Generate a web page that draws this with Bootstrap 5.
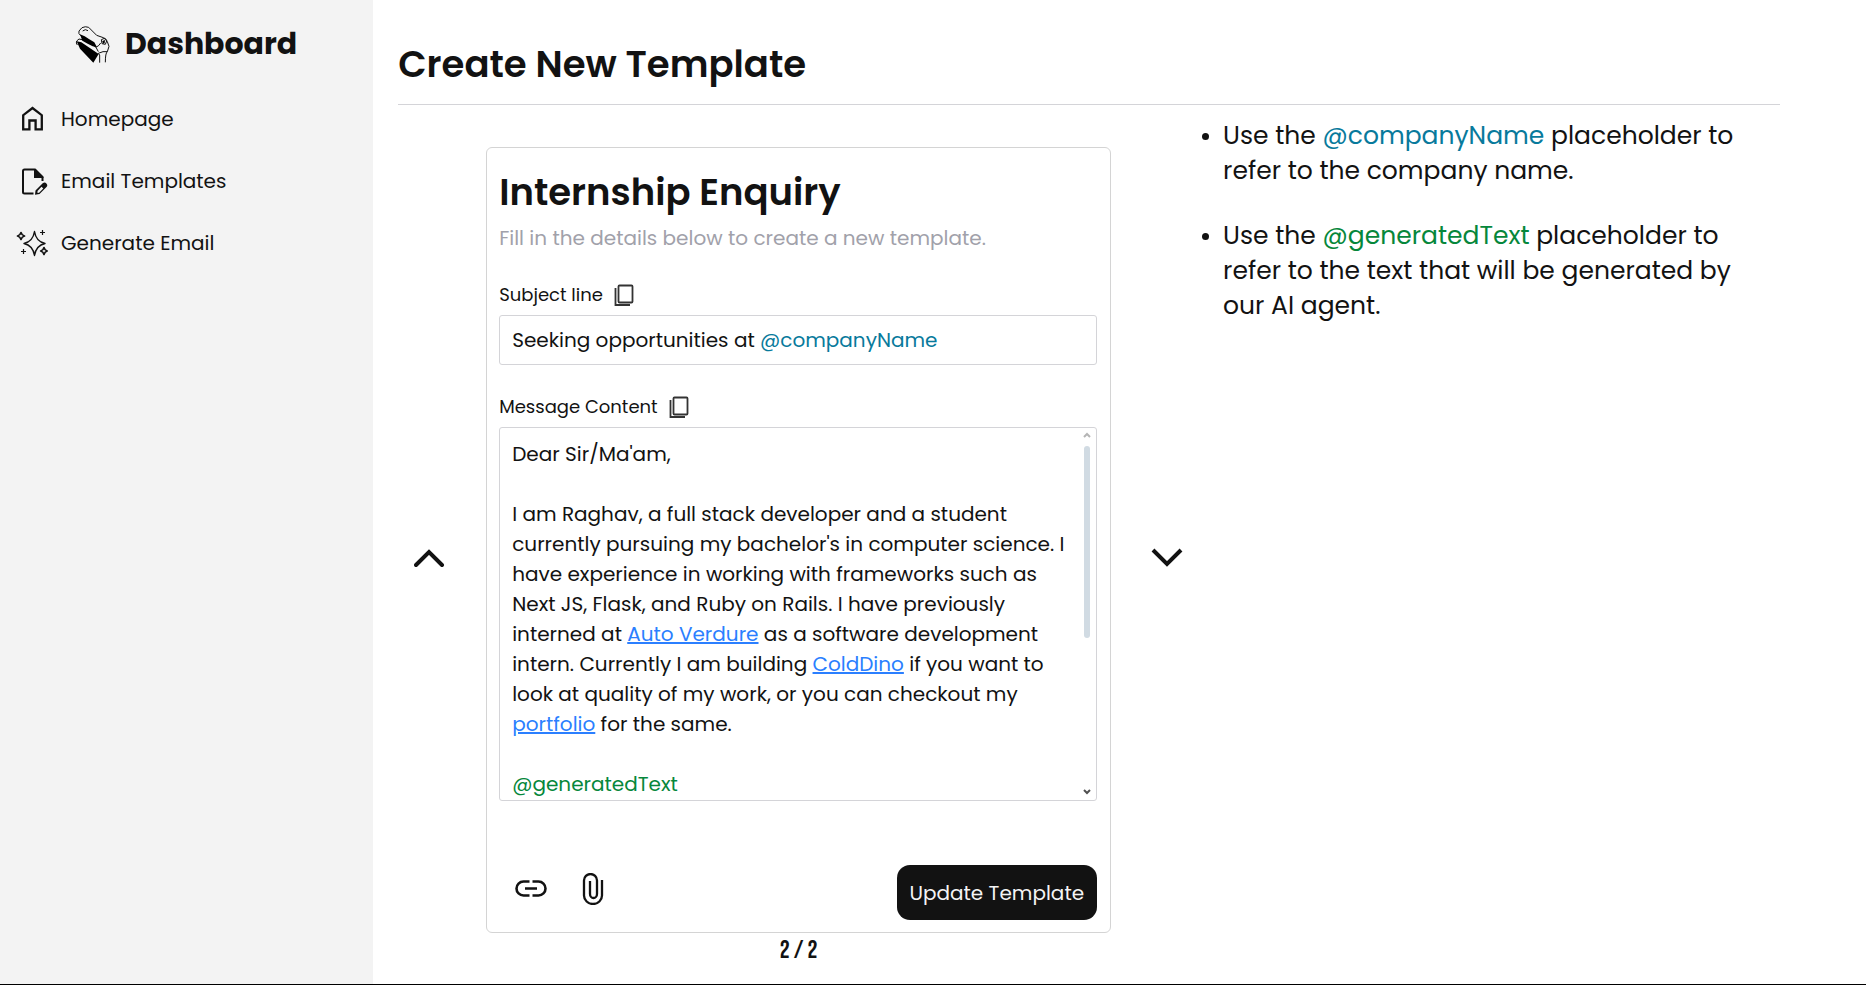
<!DOCTYPE html>
<html lang="en">
<head>
<meta charset="utf-8">
<meta name="viewport" content="width=device-width, initial-scale=1">
<title>Create New Template</title>
<link href="https://cdn.jsdelivr.net/npm/bootstrap@5.3.0/dist/css/bootstrap.min.css" rel="stylesheet">
<style>
  body { font-family: Poppins, Inter, sans-serif; font-size: 20px; line-height: 30px; color: #121212; background: #fff; }
  .app-shell { min-height: 100vh; border-bottom: 1px solid #000; }
  .app-side { flex: 0 0 20%; background: #f3f3f3; }
  .app-main { padding: 40px 86px 20px 25px; min-width: 0; }
  .brand { gap: 11px; padding: 21px 6px 21px 0; }
  .brand-name { font-size: 30px; line-height: 36px; font-weight: 700; }
  .side-link { color: #121212; height: 62px; gap: 13px; font-size: 20px; }
  .side-icon { width: 32px; height: 32px; flex: none; }
  .page-title, .form-title { font-size: 37px; line-height: 48px; font-weight: 600; margin: 0; }
  .page-head { border-bottom: 1px solid #d4d4d8; padding-bottom: 16px; }
  .editor-grid { display: grid; grid-template-columns: 88px minmax(0, 625fr) 112px minmax(0, 557fr); }
  .step-cell { padding-top: 44px; }
  .template-card { border: 1px solid #d4d4d4; border-radius: 6px; padding: 20px 13px 12px 12px; margin-top: 42px; }
  .form-hint { color: #a1a1aa; margin: 7px 0 0; }
  .field-label { font-size: 18px; line-height: 24px; margin: 30px 0 8px; gap: 11px; }
  .field-box { border: 1px solid #d4d4d8; border-radius: 3px; }
  .subject-box { padding: 9px 12px; outline: 0; }
  .message-box { height: 374px; overflow: hidden; }
  .message-text { padding: 11px 0 0 12px; outline: 0; overflow: hidden; min-width: 0; }
  .message-text p { margin: 0 0 30px; }
  .message-text a { color: #2b7fff; }
  .scroll-rail { width: 18px; padding: 2px 0; }
  .scroll-thumb { width: 6px; height: 192px; border-radius: 3px; background: #d1dbe3; }
  .tag-company { color: #087a9c; }
  .tag-generated { color: #06873b; }
  .form-actions { margin-top: 64px; }
  .form-tools { gap: 30px; padding: 0 0 8px 16px; }
  .bare-btn { border: 0; background: none; padding: 0; color: #121212; line-height: 1; }
  .submit-btn { height: 55px; padding: 0 13px; border-radius: 13px; background: #121212; color: #f4f4f5; border: 0; }
  .page-count { font-family: "Bebas Neue", Oswald, "Liberation Sans Narrow", Inter, sans-serif; font-size: 25px; line-height: 26px; font-weight: 400; margin-top: 5px; }
  .tips { font-size: 25px; line-height: 35px; padding: 13px 24px 0 0; margin: 0; }
  .tips li { margin-bottom: 30px; }
  .tips li::marker { font-size: 20px; }
</style>
</head>
<body>
<div class="app-shell d-flex">
  <aside class="app-side">
    <div class="brand d-flex justify-content-center align-items-center">
      <svg width="44" height="46" viewBox="0 0 132 138" fill="none" stroke="#121212" stroke-width="3" aria-hidden="true">
        <path d="M32 44Q24 38 27 30L36 20Q46 15 56 19L64 27 80 43 100 50Q110 53 112 62L117 76 112 92Q106 96 106 124M32 44 40 50M38 30 46 26 54 29M20 60 27 54 45 58 62 66 78 79 85 92M20 60Q17 66 22 72M78 79Q88 74 92 66M94 56 103 52 110 60 106 70 96 68ZM85 97 89 102V125M85 97 99 92 112 92"/>
        <path fill="#000" stroke="none" d="M20 61 34 64 86 99 70 125 50 104 30 83ZM30 40l14 6 14 9 15 9 8 15-13-3-15-8-16-9Z"/>
        <path fill="#000" stroke="none" d="m97 60 8-3-1 9-5 2Z"/>
      </svg>
      <span class="brand-name">Dashboard</span>
    </div>
    <nav class="d-flex flex-column ps-3" aria-label="Main">
      <a href="#" class="side-link d-flex align-items-center text-decoration-none">
        <svg class="side-icon" viewBox="0 0 32 32" fill="none" stroke="#121212" stroke-width="2.3"><path d="M7.2 26.3V12.2L16.5 5l9.3 7.2v14.1h-6.2v-8.8h-6.2v8.8Z"/></svg>
        Homepage</a>
      <a href="#" class="side-link d-flex align-items-center text-decoration-none">
        <svg class="side-icon" viewBox="0 0 32 32" fill="none" stroke="#121212" stroke-width="2"><path d="M17.5 28.5H8.5Q7 28.5 7 27V6Q7 4.500 8.500 4.500H19L26.500 12V16"/><path fill="#121212" stroke="none" d="M18 4h1.500l8 8.200v.8H18Z"/><path stroke="none" fill="#121212" fill-rule="evenodd" d="M19.500 25.500l7.200-7.200q2-1.600 3.700.1t.1 3.600l-7 7-4.500.7ZM21.500 26v2l1.600-.2 4.200-4.200-1.800-1.800Z"/></svg>
        Email Templates</a>
      <a href="#" class="side-link d-flex align-items-center text-decoration-none">
        <svg class="side-icon" viewBox="0 0 32 32" fill="none" stroke="#121212" stroke-width="1.4" stroke-linejoin="round"><path d="M18.500 4.500Q20 14.500 29 16.500 20 18.500 18.500 28.500 17 18.500 8 16.500 17 14.500 18.500 4.500Z"/><path stroke-width="1.700" d="M5 5.500Q5.800 8.300 8.500 9 5.800 9.700 5 12.500 4.200 9.700 1.500 9 4.200 8.300 5 5.500ZM28 20.500Q28.700 23.300 31.200 24 28.700 24.700 28 27.500 27.300 24.700 24.700 24 27.300 23.300 28 20.500Z"/><path stroke-width="1.200" d="M26.500 3v5M24 5.500h5M7.500 22v5M5 24.500h5"/></svg>
        Generate Email</a>
    </nav>
  </aside>

  <main class="app-main flex-grow-1">
    <header class="page-head"><h1 class="page-title">Create New Template</h1></header>
    <div class="editor-grid">
      <div class="step-cell d-flex align-items-center justify-content-center pe-4">
        <button type="button" class="bare-btn" aria-label="Previous template">
          <svg width="32" height="32" viewBox="0 0 32 32" fill="none" stroke="#121212" stroke-width="4" stroke-linecap="round"><path d="M2 24 15 11l13 13"/></svg>
        </button>
      </div>
      <div>
        <form class="template-card">
          <h2 class="form-title">Internship Enquiry</h2>
          <p class="form-hint">Fill in the details below to create a new template.</p>
          <div class="field-label d-flex align-items-center">
            <span id="subject-label">Subject line</span>
            <button type="button" class="bare-btn" aria-label="Copy subject">
              <svg class="d-block" width="20" height="24" viewBox="0 0 20 24" fill="none" stroke="#333" stroke-width="1.800"><rect x="4.500" y="2.500" width="14" height="17" rx="1"/><path d="M1.500 5v17H16"/></svg>
            </button>
          </div>
          <div class="field-box subject-box" contenteditable="true" role="textbox" aria-labelledby="subject-label">Seeking opportunities at <span class="tag-company">@companyName</span></div>
          <div class="field-label d-flex align-items-center">
            <span id="message-label">Message Content</span>
            <button type="button" class="bare-btn" aria-label="Copy message">
              <svg class="d-block" width="20" height="24" viewBox="0 0 20 24" fill="none" stroke="#333" stroke-width="1.800"><rect x="4.500" y="2.500" width="14" height="17" rx="1"/><path d="M1.500 5v17H16"/></svg>
            </button>
          </div>
          <div class="field-box message-box d-flex">
            <div class="message-text flex-grow-1" contenteditable="true" role="textbox" aria-multiline="true" aria-labelledby="message-label">
              <p>Dear Sir/Ma'am,</p>
              <p>I am Raghav, a full stack developer and a student<br>currently pursuing my bachelor's in computer science. I<br>have experience in working with frameworks such as<br>Next JS, Flask, and Ruby on Rails. I have previously<br>interned at <a href="#">Auto Verdure</a> as a software development<br>intern. Currently I am building <a href="#">ColdDino</a> if you want to<br>look at quality of my work, or you can checkout my<br><a href="#">portfolio</a> for the same.</p>
              <p class="tag-generated">@generatedText</p>
            </div>
            <div class="scroll-rail d-flex flex-column align-items-center flex-shrink-0" aria-hidden="true">
              <svg width="8" height="12" viewBox="0 0 8 12" fill="none" stroke="#b5b5b5" stroke-width="2"><path d="m1 7 3-3 3 3"/></svg>
              <div class="scroll-thumb mt-1"></div>
              <svg class="mt-auto" width="8" height="12" viewBox="0 0 8 12" fill="none" stroke="#505050" stroke-width="2"><path d="m1 4 3 3 3-3"/></svg>
            </div>
          </div>
          <div class="form-actions d-flex align-items-center justify-content-between">
            <div class="form-tools d-flex align-items-center">
              <button type="button" class="bare-btn" aria-label="Insert link">
                <svg width="32" height="32" viewBox="0 0 32 32" fill="none" stroke="#121212" stroke-width="2.600"><path d="M14.500 8.500H8.500a7 7 0 0 0 0 14h6M17.500 8.500h6a7 7 0 0 1 0 14h-6M10 15.500h12"/></svg>
              </button>
              <button type="button" class="bare-btn" aria-label="Attach file">
                <svg width="32" height="32" viewBox="0 0 32 32" fill="none" stroke="#121212" stroke-width="2.300"><path d="M25 7v15.500a9 8.500 0 0 1-18 0V7.500a6.500 6.500 0 0 1 13 0V21a3.500 4 0 0 1-7 0V8"/></svg>
              </button>
            </div>
            <button type="submit" class="submit-btn">Update Template</button>
          </div>
        </form>
        <div class="page-count text-center">2 / 2</div>
      </div>
      <div class="step-cell d-flex align-items-center justify-content-center">
        <button type="button" class="bare-btn" aria-label="Next template">
          <svg width="32" height="32" viewBox="0 0 32 32" fill="none" stroke="#121212" stroke-width="4"><path d="m2 9 14 14L30 9"/></svg>
        </button>
      </div>
      <ul class="tips">
        <li>Use the <span class="tag-company">@companyName</span> placeholder to<br>refer to the company name.</li>
        <li>Use the <span class="tag-generated">@generatedText</span> placeholder to<br>refer to the text that will be generated by<br>our AI agent.</li>
      </ul>
    </div>
  </main>
</div>
<script src="https://cdn.jsdelivr.net/npm/bootstrap@5.3.0/dist/js/bootstrap.bundle.min.js"></script>
</body>
</html>
